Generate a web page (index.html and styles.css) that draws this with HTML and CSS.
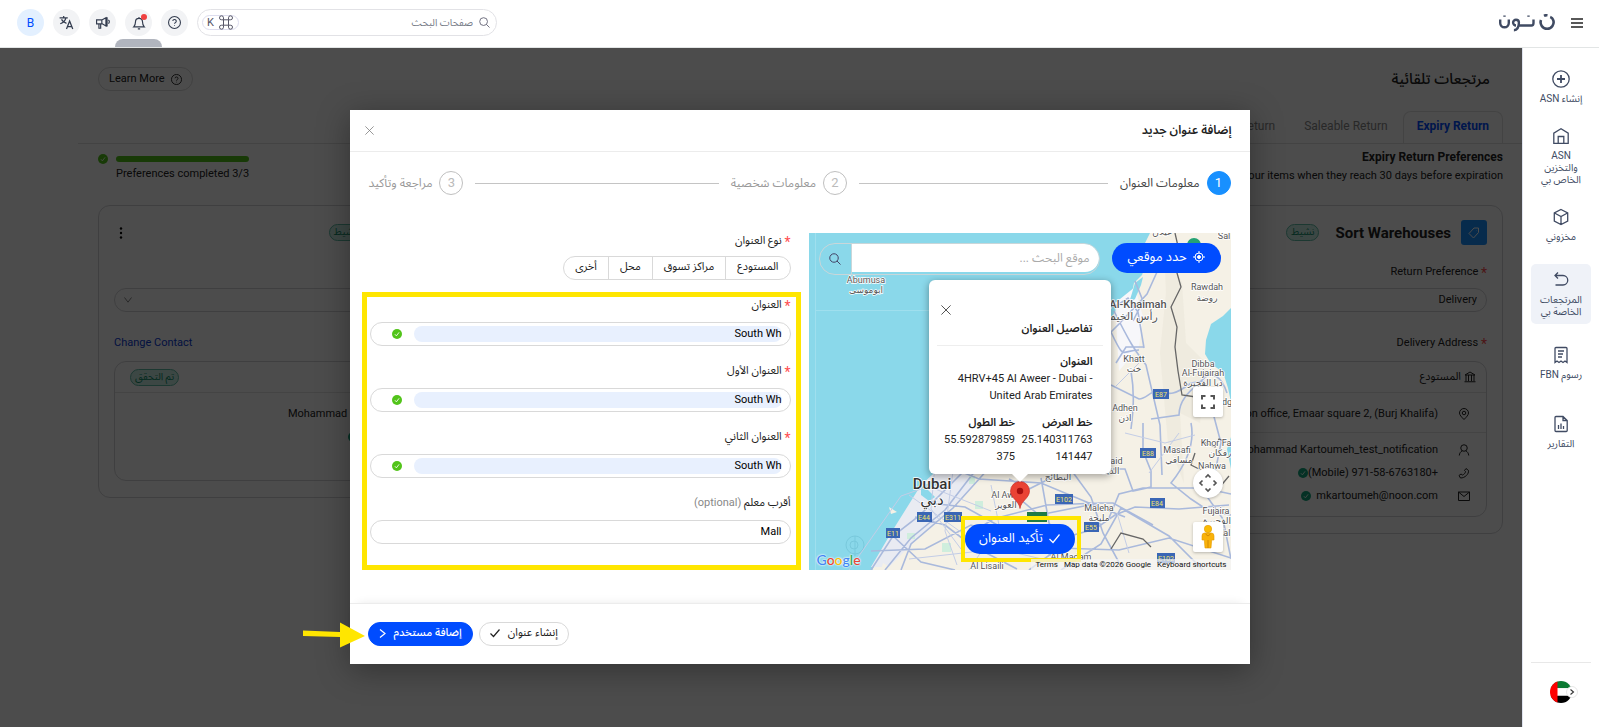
FILE: index.html
```
<!DOCTYPE html>
<html lang="ar" dir="rtl">
<head>
<meta charset="utf-8">
<title>نون - مرتجعات تلقائية</title>
<link rel="stylesheet" href="styles.css">
</head>
<body>
<svg class="sprite" aria-hidden="true">
  <symbol id="i-help" viewBox="0 0 24 24"><circle cx="12" cy="12" r="11"/><path d="M8.800 9.300a3.200 3.200 0 0 1 6.400 .7c0 2.200-3.200 2.400-3.200 4.500"/><path d="M12 17v1.200"/></symbol>
  <symbol id="i-x" viewBox="0 0 24 24"><path d="M1 1l22 22M23 1 1 23"/></symbol>
  <symbol id="i-ok" viewBox="0 0 24 24"><circle cx="12" cy="12" r="12" fill="currentColor" stroke="none"/><path d="M7 12.500l3.500 4L17 8" stroke="#fff" stroke-width="2"/></symbol>
  <symbol id="i-search" viewBox="0 0 24 24"><circle cx="10" cy="10" r="8.500"/><path d="M16 16l7 7"/></symbol>
</svg>

<header class="topbar">
  <div class="brand">
    <button class="plain menu" aria-label="القائمة"><svg class="ico" width="12" height="10" viewBox="0 0 12 10"><path d="M0 1h12M0 5h12M0 9h12" stroke-width="1.400"/></svg></button>
    <svg class="logo" width="56" height="18" viewBox="0 0 56 18" role="img" aria-label="نون"><path d="M42 6a6.500 6.500 0 1 0 12.200 0c-.5-1.500-1.500-2.500-3-3M45 1.800a6 6 0 0 1 3.500-.6"/><path d="M1.200 5.500v3.500a4.300 4.300 0 0 0 8.600 0V5.500M5.500 1.500v1.200M17 11.500a2.900 2.900 0 1 1 2.900-2.900c0 4.500-1 7.600-5 7.600M20 11.500h12.500c1.500 0 2-1 2-2.500V5.500M29.500 1.500v1.200" stroke-width="2.400"/></svg>
  </div>
  <div class="tools">
    <label class="search"><svg class="ico" width="11" height="11"><use href="#i-search"/></svg><input type="text" placeholder="صفحات البحث" aria-label="صفحات البحث"><kbd dir="ltr"><span>K</span><svg class="ico" width="14" height="15" viewBox="0 0 14 15"><path d="M4.500 4.800h5v5.400h-5zM4.500 4.800H2.700a2 2 0 1 1 1.800-2zM9.500 4.800h1.800a2 2 0 1 0-1.800-2zM4.500 10.200H2.700a2 2 0 1 0 1.800 2zM9.500 10.200h1.800a2 2 0 1 1-1.800 2z" stroke-width="1"/></svg></kbd></label>
    <button class="round" aria-label="مساعدة"><svg class="ico" width="13" height="13"><use href="#i-help"/></svg></button>
    <button class="round bell" aria-label="الإشعارات"><svg class="ico" width="14" height="14" viewBox="0 0 24 24"><path d="M3 18.500h18c-2-2-3-3-3-8.500a6 6 0 0 0-12 0c0 5.500-1 6.500-3 8.500zM12 1.500V4M10 22h4"/></svg><i class="dot"></i></button>
    <button class="round" aria-label="الإعلانات"><svg class="ico" width="14" height="14" viewBox="0 0 24 24"><path d="M1 6.500h9v7H1zM10 7l7-4v14l-7-4M17 3h2v14h-2M21 7c2.500 1 2.500 5 0 6M5 14v7h3v-7"/></svg></button>
    <button class="round" aria-label="اللغة"><svg class="ico" width="15" height="15" viewBox="0 0 24 24"><path d="M1 4.500h13M7.500 1.500v3M11 4.500c-1 5-5 8-9 9.500M4 7c1.500 3 5 5.500 8 6.500M12 22.500l5-13 5 13M14 18.500h6.500"/></svg></button>
    <button class="round user">B</button>
    <i class="handle"></i>
  </div>
</header>

<div class="shell">
  <nav class="rail" aria-label="التنقل">
    <ul>
      <li><a href="#"><svg class="ico" width="18" height="18" viewBox="0 0 18 18"><circle cx="9" cy="9" r="8.200"/><path d="M9 5v8M5 9h8" stroke-width="1.800"/></svg><span>إنشاء ASN</span></a></li>
      <li><a href="#"><svg class="ico" width="18" height="18" viewBox="0 0 18 18"><path d="M1.800 16.300V6.200L9 1.800l7.200 4.400v10.100zM6.200 16V9.500h5.600V16"/></svg><span>ASN والتخزين الخاص بي</span></a></li>
      <li class="more-s"><a href="#"><svg class="ico" width="18" height="18" viewBox="0 0 18 18"><path d="M9 1.500l6.700 3.300v8.400L9 16.500l-6.700-3.300V4.800zM2.500 5L9 8.500 15.500 5M9 8.500v8"/></svg><span>مخزوني</span></a></li>
      <li class="more-s"><a class="on" href="#"><svg class="ico" width="18" height="18" viewBox="0 0 18 18"><path d="M6 1.500L3 4.500l3 3M3 4.500h8a4.500 4.500 0 0 1 0 9.500H3.500"/></svg><span>المرتجعات الخاصة بي</span></a></li>
      <li class="more-m"><a href="#"><svg class="ico" width="18" height="18" viewBox="0 0 18 18"><path d="M3 16.500v-14q0-1 1-1h10q1 0 1 1v14l-2-1.500-2 1.500-2-1.500-2 1.500-2-1.500zM6 5h6M6 8h5M6 11h4"/></svg><span>رسوم FBN</span></a></li>
      <li><a href="#"><svg class="ico" width="18" height="18" viewBox="0 0 18 18"><path d="M3 2.500q0-1 1-1h7l4.200 4v10q0 1-1 1H4q-1 0-1-1zM11 1.500v4h4M6.500 14v-4M9 14V8.500M11.500 14v-3"/></svg><span>التقارير</span></a></li>
    </ul>
    <button class="plain flag" aria-label="الإمارات"><svg width="28" height="22" viewBox="0 0 28 22"><defs><clipPath id="fc"><circle cx="11" cy="11" r="11"/></clipPath></defs><g clip-path="url(#fc)"><path fill="#0a7a32" d="M0 0h22v7.300H0z"/><path fill="#fff" d="M0 7.300h22v7.400H0z"/><path d="M0 14.700h22V22H0z"/><path fill="#f00" d="M0 0h7.500v22H0z"/></g><circle cx="22" cy="11" r="5.500" fill="#fff" stroke="#ddd" stroke-width=".7"/><path d="M20.500 8.500l3 2.500-3 2.500" fill="none" stroke="#333" stroke-width="1.100"/></svg></button>
  </nav>

  <main class="page">
    <div class="titlebar"><h1>مرتجعات تلقائية</h1><button class="pill learn"><svg class="ico" width="11" height="11"><use href="#i-help"/></svg>Learn More</button></div>
    <div class="tabs"><button class="tab on">Expiry Return</button><button class="tab">Saleable Return</button><button class="tab">Customer Return</button></div>
    <div class="prefs">
      <div><h2>Expiry Return Preferences</h2><p>We will return your items when they reach 30 days before expiration</p></div>
      <div class="progress"><div><i class="bar"></i><span>Preferences completed 3/3</span></div><svg class="ico okc" width="10" height="10"><use href="#i-ok"/></svg></div>
    </div>
    <div class="cards">
      <section class="card">
        <div class="card-top"><span class="badge"><svg class="ico" width="12" height="12" viewBox="0 0 24 24"><path d="M12 2h9v9L11 22l-9-9zM17 6.500v.5"/></svg></span><h3>Sort Warehouses</h3><span class="tag">نشيط</span></div>
        <div class="lab"><span><b class="req">*</b> Return Preference</span></div>
        <select class="sel" aria-label="Return Preference"><option>Delivery</option></select>
        <div class="lab"><span><b class="req">*</b> Delivery Address</span></div>
        <div class="box">
          <div class="box-top"><span class="what"><svg class="ico" width="12" height="12" viewBox="0 0 24 24"><path d="M2 8l10-6 10 6zM4 8v12M9 8v12M15 8v12M20 8v12M1 21.500h22"/></svg>المستودع</span></div>
          <div class="row first"><svg class="ico" width="12" height="12" viewBox="0 0 24 24"><path d="M12 23c-5-5-9-9-9-13a9 9 0 0 1 18 0c0 4-4 8-9 13z"/><circle cx="12" cy="10" r="3.500"/></svg><span dir="ltr">noon office, Emaar square 2, (Burj Khalifa)</span></div>
          <div class="row"><svg class="ico" width="12" height="12" viewBox="0 0 24 24"><circle cx="12" cy="8" r="6.500"/><path d="M2.500 23c.5-5 3-8 6-9M21.500 23c-.5-5-3-8-6-9"/></svg><span dir="ltr">Mohammad Kartoumeh_test_notification</span></div>
          <div class="row"><svg class="ico" width="12" height="12" viewBox="0 0 24 24"><path d="M16 3l5 4c1 7-7 15-16 15l-3-5 4-3 3 2c3-1 6-4 6-7l-2-2z"/></svg><span dir="ltr">(Mobile) 971-58-6763180+</span><svg class="ico tick" width="10" height="10"><use href="#i-ok"/></svg></div>
          <div class="row"><svg class="ico" width="12" height="12" viewBox="0 0 24 24"><path d="M1 4h22v17H1zM1 4l11 9L23 4"/></svg><span dir="ltr">mkartoumeh@noon.com</span><svg class="ico tick gap" width="10" height="10"><use href="#i-ok"/></svg></div>
        </div>
      </section>
      <section class="card last">
        <div class="card-top"><span class="badge"></span><h3>Store Warehouses</h3><span class="tag">نشيط</span><button class="plain dots" aria-label="المزيد"><svg width="4" height="12" viewBox="0 0 4 12"><circle cx="2" cy="1.500" r="1.200"/><circle cx="2" cy="6" r="1.200"/><circle cx="2" cy="10.500" r="1.200"/></svg></button></div>
        <div class="lab"></div>
        <div class="sel drop"><svg class="ico" width="8" height="6" viewBox="0 0 8 6"><path d="M.5.5L4 5.200 7.500.5" stroke-width="1"/></svg></div>
        <div class="lab end"><a href="#">Change Contact</a></div>
        <div class="box">
          <div class="box-top end"><span class="tag">تم التحقق</span></div>
          <div class="row"><i class="sp"></i><span dir="ltr">Mohammad Kartoumeh_test_notification</span></div>
          <div class="row"><i class="sp"></i><span dir="ltr">(Mobile) 971-58-6763180+</span><svg class="ico tick" width="10" height="10"><use href="#i-ok"/></svg></div>
          <div class="row"><i class="sp"></i></div>
        </div>
      </section>
    </div>
    <div class="backdrop"></div>
  </main>
</div>

<div class="stage">
<div class="modal" role="dialog" aria-labelledby="mt">
  <div class="modal-head"><h2 id="mt">إضافة عنوان جديد</h2><button class="plain x" aria-label="إغلاق"><svg class="ico" width="9" height="9"><use href="#i-x"/></svg></button></div>
  <ol class="steps">
    <li class="on"><b>1</b><span>معلومات العنوان</span></li>
    <li><b>2</b><span>معلومات شخصية</span></li>
    <li><b>3</b><span>مراجعة وتأكيد</span></li>
  </ol>
  <div class="modal-body">
    <div class="map" dir="ltr">
      <svg class="land" viewBox="0 0 422 337" preserveAspectRatio="xMidYMid slice">
        <path fill="#8ad8ea" d="M0 0h422v337H0z"/>
        <path fill="#f5f1e6" d="M341 0l-5 10 2 18-5 14-8 8-3 14-12 10-30 40-60 60-60 60-28 22-4 16-22 20-18 14-20 20-5 12-12 13-6 12H422V0z"/>
        <path fill="#ece8dc" d="M355 10l18 40 4 60 20 20-6 60-20-10 4 70-16-40-8-90 6-60z" opacity=".7"/>
        <path fill="#e9ebf2" d="M112 252l22-20 34 0-6 24-26 24-26 24-30 30H62l20-34z"/>
        <path fill="#f7f7fa" d="M306 70l20-16 8 30-4 30-20 24z"/>
        <path fill="#cfeedd" d="M160 243h6v8h-6zM166 268h8v8h-8zM98 300h8v6h-8zM133 310h9v9h-9z"/>
        <path fill="#8ad8ea" d="M422 75l-8 8-12 8-5 16-1 14 6 10 12 8 5 16 3 14zM422 204l-4 12 4 20zM326 50l8-6-2 8-6 14-6 4zM112 254l12-6 4 4-10 4 8 8-6 4-8-6z"/>
        <g fill="none" stroke="#79c9dc" stroke-width="1"><circle cx="46" cy="312" r="9"/><circle cx="45" cy="312" r="4"/><path d="M46 303v20"/></g>
        <path fill="#f5f1e6" d="M80 274l8 5-6 2zM74 330l12 7H72z"/>
        <g fill="none" stroke="#9fdfee"><path d="M6.500 0v337M7 77.500h113"/></g>
        <g fill="none" stroke="#a9b9dc" stroke-width="1.600">
          <path d="M62 337l22-34 26-20 26-26 24-24 40-42 60-50 50-50 28-30 10-22"/>
          <path d="M76 337l26-32 34-28 20-26 14-18M92 337l10-26 42-36 36-40M62 318l54-2 46-24 60 18 20 12M84 303l28 26 34 8M106 284l30 8 26 20 46 24M120 270l36 4 36 20M136 232l34 14 62 4 48 20 36 14M200 246l20 10 28-14M206 262l24 20 60-12 14 0 40 22M160 302l24-16 54-14 54-2M232 245l8 45 10 16 36-10 20-14 20-8 44 2 50-4"/>
          <path d="M302 99c14 30 10 18 28 18M305 78c20 40 22 40 32 54l14 60 2 50M302 152l28 14c8 0 12-10 22-8 8 4 14 4 30-8l14-2M307 130l10-16 18 0M322 196c2-16 4-34 0-58M334 190v28l8 20 0 16-18 4-8-22-12 0M342 186l28-4c0-20 20-30 26-38 8-4 16-2 22 16M382 190c4 20-4 40-20 60l20 16 18 12 22 4M300 285l10-24 24-6 60 0 28 6M252 337l40-26 20-36 48 28 34 34M220 337l30-22 60 2 50-12 62 20M404 180l8 30-6 30-12 18 20 28 8 40"/>
          <path d="M307 73l12-8 10 14 6 36M326 48l8 20-10 20M260 234l22 30 12 36 20 37"/>
        </g>
        <g fill="none" stroke="#c3cde6"><path d="M40 337l52-74 40-14M126 232l-4 44 30 40M144 238l-8 60 12 34M100 262l70 50M116 252l66 26M330 130l-24 24M340 240l30-40M100 326l90-10 60 14M182 252l8 40-30 45M316 200l40 10 30-8M320 320l-12-40"/></g>
        <g fill="none" stroke="#666" stroke-width="1.300"><path d="M366 0l5 22-3 18 4 14-10 20 6 20-2 20 3 24 4 24 14 2 6 3"/><path d="M392 208l14 6 4-8 10 4M386 220l-4 12 12 6M302 316l10-16 22 6 8 8M396 245l14 10 10-12"/></g>
        <circle cx="385" cy="12" r="7" fill="#25a273"/>
        <g class="shield"><rect x="344" y="156" width="16" height="10"/><rect x="331" y="215" width="16" height="10"/><rect x="246" y="261" width="18" height="10"/><rect x="341" y="265" width="15" height="10"/><rect x="275" y="289" width="15" height="10"/><rect x="108" y="279" width="15" height="10"/><rect x="135" y="279" width="18" height="10"/><rect x="77" y="295" width="14" height="10"/><rect x="348" y="320" width="18" height="10"/><rect class="g" x="218" y="279" width="20" height="10"/></g>
        <g class="sn"><text x="352" y="164">E87</text><text x="339" y="223">E88</text><text x="255" y="269">E102</text><text x="348" y="273">E84</text><text x="282" y="297">E55</text><text x="115" y="287">E44</text><text x="144" y="287">E311</text><text x="84" y="303">E11</text><text x="357" y="328">E102</text></g>
        <g class="pl">
          <text x="57" y="50">Abumusa</text><text x="57" y="60">ابوموسی</text>
          <text x="398" y="57">Rawdah</text><text x="398" y="68">روضة</text><text x="415" y="6">Sal</text>
          <text x="353" y="2">غيلان</text>
          <text class="m" x="329" y="75">Al-Khaimah</text><text class="m" x="322" y="87">رأس الخيمة</text>
          <text x="325" y="129">Khatt</text><text x="325" y="139">خت</text>
          <text x="394" y="134">Dibba</text><text x="394" y="143">Al-Fujairah</text><text x="394" y="153">دبا الفجيرة</text>
          <text x="316" y="178">Adhen</text><text x="316" y="188">اذن</text><text x="418" y="172">dg</text>
          <text x="368" y="220">Masafi</text><text x="370" y="230">مسافي</text>
          <text x="407" y="213">Khor Fa</text><text x="411" y="223">رفكان</text><text x="403" y="236">Nahwa</text>
          <text x="302" y="231">Dhaid</text><text x="302" y="241">الذيد</text><text x="249" y="247">البطائح</text>
          <text class="d" x="123" y="256">Dubai</text><text class="d" x="123" y="272">دبي</text>
          <text x="200" y="265">Al Aweer</text><text x="197" y="275">العوير</text>
          <text x="290" y="278">Maleha</text><text x="290" y="288">مليحة</text>
          <text x="407" y="281">Fujaira</text><text x="408" y="291">الفجيرة</text><text x="415" y="303">Kal</text>
          <text x="262" y="327">Al Madam</text><text x="178" y="336">Al Lisaili</text>
        </g>
      </svg>
      <svg class="pin" width="20" height="28" viewBox="0 0 20 28"><path fill="#ea4335" stroke="#c5221f" stroke-width=".6" d="M10 27.500C9 20 .5 17 .5 10a9.500 9.500 0 0 1 19 0C19.500 17 11 20 10 27.500z"/><circle cx="10" cy="10" r="3.200" fill="#a50e0e"/></svg>
      <div class="finder"><button class="plain" aria-label="بحث"><svg class="ico" width="12" height="12"><use href="#i-search"/></svg></button><input type="text" dir="rtl" placeholder="موقع البحث ..." aria-label="موقع البحث"></div>
      <button class="cta locate" dir="rtl"><svg class="ico" width="12" height="12" viewBox="0 0 24 24"><circle cx="12" cy="12" r="8"/><circle cx="12" cy="12" r="3" fill="currentColor"/><path d="M12 0v5M12 19v5M0 12h5M19 12h5"/></svg>حدد موقعي</button>
      <div class="info" dir="rtl">
        <button class="plain close" aria-label="إغلاق"><svg class="ico" width="10" height="10"><use href="#i-x"/></svg></button>
        <h3>تفاصيل العنوان</h3>
        <div class="info-body"><h4>العنوان</h4><p dir="ltr">4HRV+45 Al Aweer - Dubai - United Arab Emirates</p>
        <div class="coords"><div><h4>خط العرض</h4><p dir="ltr">25.140311763<wbr>141447</p></div><div><h4>خط الطول</h4><p dir="ltr">55.592879859<wbr>375</p></div></div></div>
      </div>
      <div class="hl-btn"><button class="cta" dir="rtl"><svg class="ico" width="11" height="9" viewBox="0 0 11 9"><path d="M.5 5l3.500 3.500L10.500.5" stroke-width="1.200"/></svg>تأكيد العنوان</button></div>
      <button class="mc full" aria-label="ملء الشاشة"><svg class="ico" width="14" height="14" viewBox="0 0 14 14"><path d="M1 4.500V1h3.500M9.500 1H13v3.500M13 9.500V13H9.500M4.500 13H1V9.500" stroke-width="2"/></svg></button>
      <button class="mc pan" aria-label="تحريك"><svg class="ico" width="18" height="18" viewBox="0 0 18 18"><path d="M6.500 3.500L9 1l2.500 2.500M6.500 14.500L9 17l2.500-2.500M3.500 6.500L1 9l2.500 2.500M14.500 6.500L17 9l-2.500 2.500" stroke-width="1.700"/></svg></button>
      <button class="mc peg" aria-label="التجوّل"><svg width="14" height="24" viewBox="0 0 14 24"><circle cx="7" cy="4" r="3.700" fill="#fbbc04" stroke="#e29a00" stroke-width=".6"/><path d="M3.500 8h7q2.500 0 2.500 3v4h-2.300l-.7 8H4l-.7-8H1v-4q0-3 2.500-3z" fill="#f9b20a" stroke="#e29a00" stroke-width=".6"/><path d="M7 15v8M4.500 9l2.500 2 2.500-2" stroke="#c98200" fill="none" stroke-width=".8"/></svg></button>
      <div class="goog"><i>G</i><i>o</i><i>o</i><i>g</i><i>l</i><i>e</i></div>
      <div class="attr"><a href="#">Terms</a><span>Map data ©2026 Google</span><a href="#">Keyboard shortcuts</a></div>
    </div>
    <form class="form">
      <fieldset class="kind"><legend><b class="req">*</b> نوع العنوان</legend>
        <div class="seg"><label><input type="radio" name="k">المستودع</label><label><input type="radio" name="k">مراكز تسوق</label><label><input type="radio" name="k">محل</label><label><input type="radio" name="k">أخرى</label></div>
      </fieldset>
      <div class="hl-form">
        <label for="a1"><b class="req">*</b> العنوان</label>
        <div class="field"><input class="auto" id="a1" type="text" value="South Wh"><svg class="ico ok" width="10" height="10"><use href="#i-ok"/></svg></div>
        <label for="a2"><b class="req">*</b> العنوان الأول</label>
        <div class="field"><input class="auto" id="a2" type="text" value="South Wh"><svg class="ico ok" width="10" height="10"><use href="#i-ok"/></svg></div>
        <label for="a3"><b class="req">*</b> العنوان الثاني</label>
        <div class="field"><input class="auto" id="a3" type="text" value="South Wh"><svg class="ico ok" width="10" height="10"><use href="#i-ok"/></svg></div>
        <label for="a4">أقرب معلم <span class="opt">(optional)</span></label>
        <div class="field"><input id="a4" type="text" value="Mall"></div>
      </div>
    </form>
  </div>
  <div class="modal-foot">
    <button class="pill">إنشاء عنوان<svg class="ico" width="10" height="8" viewBox="0 0 10 8"><path d="M.5 4.500l3 3L9.500.5" stroke-width="1.200"/></svg></button>
    <button class="pill primary">إضافة مستخدم<svg class="ico" width="7" height="9" viewBox="0 0 7 9"><path d="M1 .5l5 4-5 4" stroke-width="1.200"/></svg></button>
    <svg class="arrow" width="62" height="26" viewBox="0 0 62 26"><path fill="#ffe600" d="M0 8.500l37 1.500V.5L62 14 37 25.500v-10.500L0 14z"/></svg>
  </div>
</div>
</div>
</body>
</html>
```
FILE: styles.css
```
:root {
  --blue: #004cff;
  --mark: #ffe600;
  --ink: #222;
  --slate: #404b63;
  --line: #d9d9d9;
  --font: Roboto, Lato, "Noto Sans Arabic", "DejaVu Sans", sans-serif;
}
* { box-sizing: border-box; }
body { margin: 0; height: 100vh; display: flex; flex-direction: column; overflow: hidden; font: 11px/16px var(--font); color: var(--ink); background: #fff; }
button, input, select { font: inherit; color: inherit; }
button { cursor: pointer; }
h1, h2, h3, h4, p, ul, ol, fieldset { margin: 0; padding: 0; border: 0; list-style: none; }
a { color: inherit; text-decoration: none; }
.sprite { position: absolute; width: 0; height: 0; }
.ico { flex: none; fill: none; stroke: currentColor; stroke-width: 2; overflow: visible; }
.plain { border: 0; background: none; padding: 0; display: flex; }
.pill { display: inline-flex; align-items: center; justify-content: center; height: 24px; padding: 0 10px; border: 1px solid var(--line); border-radius: 12px; background: #fff; }
.req { display: inline-block; vertical-align: -3px; color: #ff4d4f; font-weight: 400; font-size: 14px; line-height: 12px; }

.topbar { flex: none; height: 48px; padding: 0 16px 2px 17px; display: flex; justify-content: space-between; align-items: center; border-bottom: 1px solid #e2e5e5; position: relative; }
.brand { display: flex; align-items: center; gap: 16px; }
.logo { fill: none; stroke: var(--slate); stroke-width: 2.600; }
.tools { display: flex; align-items: center; gap: 9px; color: #333c4f; }
.search { width: 300px; height: 27px; border: 1px solid #e2e2e6; border-radius: 14px; display: flex; align-items: center; gap: 6px; padding: 0 6px 0 4px; color: #667; }
.search input { flex: 1; min-width: 0; border: 0; background: none; padding: 0; outline: 0; font-size: 10px; }
.search input::placeholder { color: #777c88; }
.search kbd { display: flex; align-items: center; gap: 5px; height: 15px; padding: 0 5px 0 4px; border: 1px solid #dde; border-radius: 8px; font: 11px/13px var(--font); color: #556; }
.round { width: 27px; height: 27px; padding: 0; border: 0; border-radius: 50%; background: #f2f3f5; display: flex; align-items: center; justify-content: center; position: relative; }
.user { background: #e3f0ff; color: var(--blue); font-size: 12px; }
.dot { position: absolute; top: 5px; right: 5px; width: 6px; height: 6px; border-radius: 50%; background: #f04040; }
.handle { position: absolute; left: 115px; bottom: 0; width: 47px; height: 8px; border-radius: 10px 10px 0 0; background: #b1b5be; }

.shell { flex: 1; min-height: 0; display: flex; }
.rail { flex: none; width: 77px; padding: 15px 8px 24px; display: flex; flex-direction: column; justify-content: space-between; border-left: 1px solid #dfe3ee; background: #fff; }
.rail ul { display: flex; flex-direction: column; gap: 9px; }
.rail a { display: flex; flex-direction: column; align-items: center; gap: 5px; padding: 7px 4px 6px; border-radius: 5px; text-align: center; font-size: 10px; line-height: 12px; color: var(--slate); }
.rail .ico { stroke-width: 1.300; }
.rail .on { background: #eff2f8; }
.more-s { padding-bottom: 6px; }
.more-m { padding-bottom: 12px; }
.flag { border-top: 1px solid #e8e8e8; padding: 18px 13px 0 0; }

.page { flex: 1; min-width: 0; position: relative; overflow: hidden; }
.backdrop { position: absolute; inset: 0; background: rgba(0, 0, 0, .7); }
.titlebar { display: flex; justify-content: space-between; align-items: center; padding: 19px 32px 0 98px; }
h1 { font-size: 15px; font-weight: 500; line-height: 24px; }
.learn { gap: 6px; }
.tabs { display: flex; gap: 1px; margin: 20px 0 0 78px; padding-right: 19px; border-bottom: 1px solid #e2e2e2; }
.tab { height: 32px; padding: 0 13px 3px; border: 1px solid transparent; border-bottom: 0; background: none; color: #888; font-size: 12px; }
.tab.on { border-color: #e2e2e2; border-radius: 8px 8px 0 0; color: var(--blue); font-weight: 700; }
.prefs { display: flex; justify-content: space-between; padding: 4px 19px 0 98px; }
.prefs h2 { font-size: 12px; line-height: 18px; direction: ltr; text-align: right; }
.prefs p { line-height: 20px; direction: ltr; }
.progress { display: flex; gap: 8px; padding-top: 8px; }
.progress > div { display: flex; flex-direction: column; gap: 4px; }
.bar { height: 6px; border-radius: 3px; background: #52c41a; }
.okc { color: #52c41a; margin-top: -2px; }
.cards { display: grid; grid-template-columns: repeat(3, 1fr); gap: 20px; align-items: start; padding: 19px 19px 0 98px; }
.card { border: 1px solid #d4d4d8; border-radius: 12px; padding: 14px 15px 16px; }
.card.last { grid-column: 3; }
.card-top { display: flex; align-items: center; gap: 10px; height: 25px; }
.card-top h3 { font-size: 15px; line-height: 24px; direction: ltr; }
.card-top .tag { margin-right: 6px; }
.badge { width: 26px; height: 25px; border-radius: 3px; background: #1890ff; color: #fff; display: flex; align-items: center; justify-content: center; }
.tag { height: 17px; padding: 0 4px; border: 1px solid #5fbba5; border-radius: 9px; background: #c9efe4; color: #0e8a68; font-size: 10px; line-height: 14px; }
.dots { margin-right: auto; padding-left: 5px; }
.lab { height: 16px; margin: 19px 0 8px; display: flex; }
.end { justify-content: flex-end; }
.lab a { color: #0b3bd6; }
.sel { display: flex; align-items: center; justify-content: flex-end; width: 100%; height: 24px; padding: 0 9px; border: 1px solid #d4d4d8; border-radius: 12px; background: none; appearance: none; color: #888; }
select.sel { color: var(--ink); }
.sel + .lab { margin: 23px 0 10px; }
.box { border: 1px solid #d4d4d8; border-radius: 12px; padding-bottom: 9px; }
.box-top { height: 31px; padding: 0 10px 0 15px; display: flex; align-items: center; border-bottom: 1px solid #e4e4e4; margin-bottom: 9px; }
.what { display: flex; align-items: center; gap: 3px; }
.row { display: flex; align-items: center; height: 23px; padding-right: 16px; white-space: nowrap; }
.row .ico:first-child, .sp { width: 12px; margin-left: 20px; }
.row.first { height: 31px; padding-bottom: 7px; margin: 0 0 5px; border-bottom: 1px solid #e4e4e4; }
.tick { color: #12a67c; }
.gap { margin-right: 5px; }

.stage { position: absolute; inset: 0; padding-top: 110px; display: flex; justify-content: center; align-items: flex-start; }
.modal { width: 900px; max-width: 100%; background: #fff; box-shadow: 0 6px 30px rgba(0, 0, 0, .35); }
.modal-head { display: flex; justify-content: space-between; align-items: center; padding: 8px 18px 9px 15px; border-bottom: 1px solid #ececec; }
.modal-head h2 { font-size: 12px; line-height: 24px; font-weight: 600; }
.x { color: #777; }
.steps { display: flex; padding: 19px 19px 38px; font-size: 12px; color: #999; }
.steps li { flex: 1; display: flex; align-items: center; gap: 7px; white-space: nowrap; line-height: 24px; }
.steps li:last-child { flex: none; }
.steps li:not(:last-child)::after { content: ""; flex: 1; height: 1px; margin: 0 5px 0 12px; background: #c4c4c4; }
.steps b { width: 24px; height: 24px; border: 1px solid #bfbfbf; border-radius: 50%; text-align: center; font-size: 13px; line-height: 22px; font-weight: 400; color: #bbb; }
.steps .on { color: #444; }
.steps .on b { background: #1890ff; border-color: #1890ff; color: #fff; }
.modal-body { display: grid; grid-template-columns: 422fr 439fr; gap: 8px; padding: 0 19px 33px 12px; }

.form label { display: block; }
.kind { padding: 0 10px; }
.kind legend { padding: 0; line-height: 16px; }
.seg { display: flex; width: fit-content; margin: 7px 0 12px; border: 1px solid var(--line); border-radius: 12px; }
.seg label { padding: 0 11px 2px; line-height: 20px; position: relative; }
.seg label + label { border-right: 1px solid var(--line); }
.seg input { position: absolute; opacity: 0; margin: 0; }
.hl-form { border: 5px solid var(--mark); padding: 0 5px 21px 3px; display: flex; flex-direction: column; }
.hl-form label { line-height: 16px; }
.field { display: flex; align-items: center; height: 24px; margin: 9px 0 17px; padding: 0 8px; border: 1px solid var(--line); border-radius: 12px; }
.field:last-child { margin-bottom: 0; }
.field input { flex: 1; min-width: 0; height: 16px; padding: 0; border: 0; outline: 0; border-radius: 8px; background: none; line-height: 16px; color: #000; }
.field .auto { background: #e8f0fe; }
.ok { color: #52c41a; margin: 0 12px 0 13px; }
.opt { color: #888; }

.map { position: relative; overflow: hidden; min-height: 337px; }
.land { position: absolute; width: 100%; height: 100%; }
.pl text { font: 9px Roboto, "DejaVu Sans", sans-serif; fill: #555; text-anchor: middle; paint-order: stroke; stroke: #fff; stroke-width: 1.500px; }
.pl .m { font-size: 11px; font-weight: 500; }
.pl .d { font-size: 15px; font-weight: 500; fill: #333; }
.shield rect { fill: #3a66b5; }
.shield .g { fill: #1e7b46; }
.sn text { font: 7px Roboto, sans-serif; fill: #f3e36b; text-anchor: middle; }
.pin { position: absolute; left: 201px; top: 248px; }
.finder { position: absolute; left: 10px; top: 10px; right: 131px; height: 32px; display: flex; border: 1px solid #c9d6d9; border-radius: 16px; overflow: hidden; }
.finder button { width: 32px; align-items: center; justify-content: center; color: #446; border-right: 1px solid #c9d6d9; }
.finder input { flex: 1; min-width: 0; height: 28px; border: 0; outline: 0; background: #fff; padding: 0 9px; font-size: 12px; border-radius: 0 14px 14px 0; }
.finder input::placeholder { color: #aaa; }
.cta { height: 30px; border: 0; border-radius: 15px; padding: 0 15px 2px; background: var(--blue); color: #fff; display: flex; align-items: center; justify-content: center; gap: 6px; font-size: 13px; white-space: nowrap; }
.locate { position: absolute; top: 10px; right: 10px; min-width: 109px; }
.info { position: absolute; left: 120px; top: 47px; width: 182px; height: 194px; border-radius: 6px; background: #fff; box-shadow: 0 2px 7px 1px rgba(0, 0, 0, .3); }
.info::after { content: ""; position: absolute; left: 83px; top: 100%; border: 8px solid transparent; border-top-color: #fff; border-bottom: 0; }
.info .close { position: absolute; left: 12px; top: 25px; color: #333; }
.info h3 { margin: 0 8px; padding: 40px 10px 8px; font-size: 11px; font-weight: 600; line-height: 17px; border-bottom: 1px solid #eee; }
.info h4 { font-size: 11px; font-weight: 600; line-height: 17px; }
.info-body { padding: 7px 18px 0 12px; }
.info p { line-height: 17px; text-align: right; }
.info-body > p { padding-left: 12px; }
.coords { display: grid; grid-template-columns: 1fr 1fr; gap: 3px; margin-top: 10px; }
.hl-btn { position: absolute; left: 152px; top: 283px; border: 4px solid var(--mark); padding: 4px 2px 4px 0; }
.hl-btn .cta { min-width: 110px; padding-inline: 14px; }
.mc { position: absolute; right: 8px; width: 30px; height: 30px; padding: 0; border: 0; border-radius: 2px; background: #fff; color: #555; display: flex; align-items: center; justify-content: center; box-shadow: 0 1px 3px rgba(0, 0, 0, .25); }
.full { bottom: 153px; }
.pan { bottom: 72px; border-radius: 50%; }
.peg { bottom: 18px; }
.goog { position: absolute; left: 8px; bottom: 2px; font: 500 14px/16px Lato, sans-serif; color: #4285f4; text-shadow: 0 0 2px #fff, 0 0 2px #fff; }
.goog i { font-style: normal; }
.goog i:nth-child(2), .goog i:nth-child(6) { color: #ea4335; }
.goog i:nth-child(3) { color: #fbbc04; }
.goog i:nth-child(5) { color: #34a853; }
.attr { position: absolute; right: 0; bottom: 0; display: flex; gap: 6px; padding: 0 4px; font: 8px/11px Roboto, sans-serif; color: #111; background: rgba(245, 245, 245, .7); }

.modal-foot { position: relative; display: flex; justify-content: flex-end; gap: 6px; padding: 18px; border-top: 1px solid #ececec; box-shadow: 0 -6px 10px -8px rgba(0, 0, 0, .12); }
.modal-foot .pill { gap: 8px; padding-bottom: 2px; }
.modal-foot .primary { background: var(--blue); border-color: var(--blue); color: #fff; font-weight: 500; }
.arrow { position: absolute; left: -47px; top: 18px; }
```
